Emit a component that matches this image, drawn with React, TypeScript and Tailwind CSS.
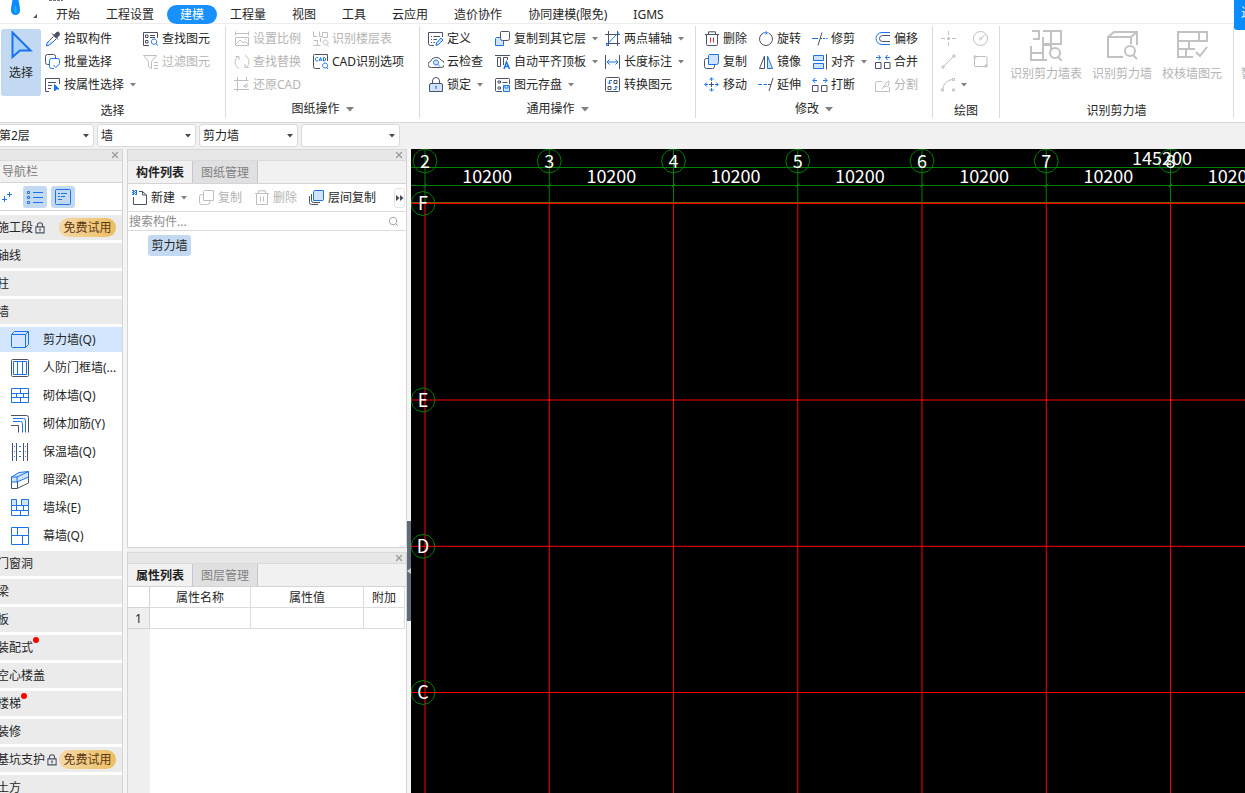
import React from "react";
import { X, Search } from "lucide-react";

/* ───────────────────────────────────────────────
   Icon strokes: d = dark, b = blue, g = disabled
────────────────────────────────────────────────── */
const DARK = "#4b5166";
const BLUE = "#1a73e8";
const GRAY = "#bfbfbf";
const LIGHT = "#d0e3fb";

const d = (path: string, fill = "none") => <path d={path} stroke={DARK} fill={fill} />;
const b = (path: string, fill = "none") => <path d={path} stroke={BLUE} fill={fill} />;
const g = (path: string, fill = "none") => <path d={path} stroke={GRAY} fill={fill} />;

const icons: Record<string, React.ReactNode> = {
    pick: (
        <>
            {d("M8.5 3.5 12.5 7.5M9 4.5 11.5 1.5Q13 .5 14 1.5T14 4.5L11.5 7Z", DARK)}
            {d("M7 2.5 13 8.5M8.5 5.5 4.5 9.5M11 8 8 11")}
            {b("M8 11 4.5 14 1.5 15 2 12 4.5 9.5", LIGHT)}
        </>
    ),
    batch: (
        <>
            {d("M5 10.5H2.5Q.5 10.5.5 8.5V2.5Q.5.5 2.5.5H8.5Q10.5.5 10.5 2.5V4")}
            {b("M9 14.5H6.5Q4.5 14.5 4.5 12.5V6.5Q4.5 4.5 6.5 4.5H12.5Q14.5 4.5 14.5 6.5V9M8.5 11 10.8 13.5 15 9.5")}
        </>
    ),
    byProp: (
        <>
            {d("M4 14.5H.5V1.5H14.5V7M3 5.5H11M3 8.5H7M3 11.5H6")}
            {b("M9.5 7.5 14 12 11.5 12 9.5 14Z", BLUE)}
        </>
    ),
    find: (
        <>
            {d("M6 14.5H.5V1.5H14.5V7M2.5 4H5V6.5H2.5ZM2.5 9.5H5V12H2.5ZM7 4.5H12M7 6.5H12")}
            {b("M11 8A2.7 2.7 0 1 0 11.1 8M13 12.5 15 14.8")}
        </>
    ),
    filter: g("M.5 1.5H13.5L8.5 7.5V14.5L5.5 12.5V7.5ZM11 8.5H15M11 11.5H15M11 14.5H15"),
    scale: g("M1.5.5V4.5M14.5.5V4.5M2 2.5H14M1.5 6.5H14.5V14.5H1.5ZM2 13 6 9 9 12 11 10.5 14 13M11 8.5H12"),
    replace: g("M5 14.5A7 7 0 0 1 4 2.5M1.5 2.5H5V6M11 1.5A7 7 0 0 1 12 13.5M14.5 13.5H11V10"),
    restore: g("M3.5 0V14.5M0 3.5H14.5M12.5 0V3M0 12.5H15M14 6.5 10 9 13 11M9 9H14"),
    floorTable: g("M.5.5V5.5H4M6.5.5V5.5H9.5V1.5H14.5V6.5H9.5M.5 9.5H4.5M.5 14.5H7.5M4.5 9V14M7.5 7V11M12.5 9A2.5 2.5 0 1 0 12.6 9M14 13.5 15.5 15.5"),
    cadOpt: (
        <>
            {d("M7 14.5H2.5Q.5 14.5.5 12.5V1.5Q.5.5 1.5.5H14.5V7")}
            {b("M5 3.5H3.5L2.5 4.5V6L3.5 7H5M6 7 7.5 3.5 9 7M6.5 6H8.5M10.5 3.5V7H11.5L12.5 6V4.5L11.5 3.5Z")}
            {b("M12 9A2.5 2.5 0 1 0 12.1 9M13.5 13 15 15")}
        </>
    ),
    define: (
        <>
            {d("M6 14.5H2.5Q.5 14.5.5 12.5V1.5H14.5V6M3 5.5H4M5.5 5.5H12M3 8.5H4M5.5 8.5H9M3 11.5H4M5.5 11.5H7")}
            {b("M8.5 12 13 7 15 9 10.5 13.5 8 14.5Z", LIGHT)}
        </>
    ),
    cloud: (
        <>
            {d("M4 13.5H3.5A3 3 0 0 1 2.5 7.5A6 6 0 0 1 13.5 6.5A3.5 3.5 0 0 1 12.5 13.5Z")}
            {b("M8 6A2.5 2.5 0 1 0 8.1 6M9.8 10.3 12 12.5", LIGHT)}
        </>
    ),
    lock: (
        <>
            {d("M4.5 6V4A3.5 3.5 0 0 1 11.5 4V6")}
            {d("M3 6.5H13Q14.5 6.5 14.5 8V14.5H1.5V8Q1.5 6.5 3 6.5Z", LIGHT)}
            {b("M8 9V12M7.5 9.5H8.5")}
        </>
    ),
    copyLayer: (
        <>
            {b("M1.5 6.5H8.5V14.5H.5V7.5Z", LIGHT)}
            {d("M6.5.5H13.5Q14.5.5 14.5 1.5V7.5Q14.5 9.5 12.5 9.5H7.5Q5.5 9.5 5.5 7.5V1.5Q5.5.5 6.5.5Z", "#fff")}
        </>
    ),
    alignTop: (
        <>
            {d("M0 1.5H15M2.5 3.5H5.5V12.5H2.5ZM8.5 11V3.5H12.5V6")}
            <path d="M9 15 11.5 8 14.5 15M10 12.5H13.5" stroke={BLUE} strokeWidth="1.5" />
        </>
    ),
    save: (
        <>
            {d("M7 14.5H1.5Q.5 14.5.5 13.5V2.5Q.5 1.5 1.5 1.5H13.5Q14.5 1.5 14.5 2.5V7M3 4H5.5V6H3ZM3 10H5.5V12H3ZM7.5 5.5H12.5")}
            {b("M8.5 8.5H14.5V14.5H8.5ZM10 8.5V11H13V8.5", LIGHT)}
        </>
    ),
    twoPoint: (
        <>
            {d("M3.5 0V15M12.5 0V15M0 3.5H15M1 12.5H15")}
            {b("M2 13.5 12.5 2.5M13 1V3.5M1.5 13V14.5H3")}
        </>
    ),
    length: (
        <>
            {d("M.5 1V15M14.5 1V15")}
            {b("M2 8H13M4.5 5.5 2 8 4.5 10.5M10.5 5.5 13 8 10.5 10.5")}
        </>
    ),
    convert: (
        <>
            {d("M2.5.5H13.5Q14.5.5 14.5 1.5V13.5Q14.5 14.5 13.5 14.5H1.5Q.5 14.5.5 13.5V1.5Q.5.5 2.5.5ZM9 3.5H12V6.5H9ZM3 9.5H6V12.5H3Z")}
            {b("M7 3.5H4.5V7M3 5.5 4.5 7 6 5.5M8.5 12.5H11V9M9.5 10.5 11 9 12.5 10.5")}
        </>
    ),
    trash: (
        <>
            {d("M1 3.5H15M4.5 3V.8H11.5V3M2.5 4V13.5Q2.5 14.5 3.5 14.5H12.5Q13.5 14.5 13.5 13.5V4")}
            <path d="M6.5 6.5V11.5M9.5 6.5V11.5" stroke="#e0313b" />
        </>
    ),
    copy: (
        <>
            {d("M4 4.5H2.5Q.5 4.5.5 6.5V12.5Q.5 14.5 2.5 14.5H8.5Q10.5 14.5 10.5 12.5V11")}
            {b("M5.5.5H14.5V8.5Q14.5 10.5 12.5 10.5H4.5V1.5Z", LIGHT)}
        </>
    ),
    move: (
        <>
            {d("M7.5 5V10M5 7.5H10")}
            {b("M7.5 4V.8M5.5 2.8 7.5.8 9.5 2.8M7.5 11V14.2M5.5 12.2 7.5 14.2 9.5 12.2M4 7.5H.8M2.8 5.5.8 7.5 2.8 9.5M11 7.5H14.2M12.2 5.5 14.2 7.5 12.2 9.5")}
        </>
    ),
    rotate: (
        <>
            {d("M5.5 2A6.5 6.5 0 1 0 10.5 2")}
            {b("M7.5 0 9.5 1.8 7.5 3.6M5.5 1.8H9")}
        </>
    ),
    mirror: (
        <>
            {d("M6.5 2V14.5H1.5Z")}
            {b("M9.5 2V14.5H14.5Z", LIGHT)}
        </>
    ),
    extend: (
        <>
            {b("M0 7.5H4M5.5 7.5H9")}
            {d("M10 7.5H13M11 14 15 1")}
        </>
    ),
    trim: (
        <>
            {b("M0 7.5H6")}
            {d("M6 14.5 10 1.5M8 7.5H10")}
            {b("M11 7.5H13M14 7.5H15.5")}
        </>
    ),
    align: (
        <>
            {b("M1.5 1.5H11.5V6.5H1.5ZM1.5 9.5H11.5V14.5H1.5Z", LIGHT)}
            {d("M14.5 0V15.5")}
        </>
    ),
    breakUp: (
        <>
            {b("M5 3.5H1.2M3.2 1 .8 3.5 3.2 6M11 3.5H14.8M12.8 1 15.2 3.5 12.8 6")}
            {d("M.5 8.5H6V14.5H.5ZM9.5 8.5H15V14.5H9.5Z")}
        </>
    ),
    offset: (
        <>
            {b("M15 1.5H7A6 6 0 0 0 7 13.5H15")}
            {d("M15 4.5H7.5A3 3 0 0 0 7.5 10.5H15")}
        </>
    ),
    merge: (
        <>
            {b("M1 3.5H5.5M3.5 1 5.5 3.5 3.5 6M15 3.5H10.5M12.5 1 10.5 3.5 12.5 6")}
            {d("M.5 8.5H6V14.5H.5ZM9.5 8.5H15V14.5H9.5Z")}
        </>
    ),
    split: g("M7 4.5H2.5Q.5 4.5.5 6.5V14.5H14.5V10M7 12 12 5 14 4 13.5 9 9 10"),
    point: (
        <>
            {g("M7.5 0V4M7.5 11V15M0 7.5H4M11 7.5H15")}
            <circle cx="7.5" cy="7.5" r="1.5" fill={GRAY} />
        </>
    ),
    circle: (
        <>
            <circle cx="7.5" cy="7.5" r="7" stroke={GRAY} fill="none" />
            {g("M8 8 12 3.5M7.5 6.5A1.2 1.2 0 1 0 7.6 6.5")}
        </>
    ),
    line: g("M2.5 12.5 12.5 2.5M1 12H3V14H1ZM12 1H14V3H12Z"),
    rect: g("M2.5 2.5H12.5Q14 2.5 14 4V11Q14 12.5 12.5 12.5H3Q1.5 12.5 1.5 11V4M1 2H3V4H1ZM12 11H14V13H12Z"),
    arc: g("M1.5 12Q3 4 11 2.5M.5 12H2.5V14H.5ZM11.5 1.5H13.5V3.5H11.5ZM11.5 12H13.5V14H11.5Z"),
    newDoc: (
        <>
            {d("M7 1.5H10.5L14.5 5V14.5H1.5V7M10.5 1.5V5H14.5")}
            {b("M0 .5H2M3 .5H5M1 1.5H3M4 1.5H5M0 2.5H2M3 2.5H5M1 3.5H3M4 3.5H5M0 4.5H2M3 4.5H5")}
        </>
    ),
    copyOff: g("M4 4.5H2.5Q.5 4.5.5 6.5V12.5Q.5 14.5 2.5 14.5H8.5Q10.5 14.5 10.5 12.5V11M5.5.5H14.5V10.5H4.5V1.5Z"),
    trashOff: g("M1 3.5H15M4.5 3V.8H11.5V3M2.5 4V14.5H13.5V4M6.5 6.5V11.5M9.5 6.5V11.5"),
    floorCopy: (
        <>
            {d("M.5 6V12.5Q.5 14.5 2.5 14.5H9M2.5 4V10.5Q2.5 12.5 4.5 12.5H11")}
            {b("M5.5.5H14.5V9.5Q14.5 10.5 13.5 10.5H4.5V1.5Z", LIGHT)}
        </>
    ),
    smallLock: d("M4.5 6V4.5A3.5 3.5 0 0 1 11.5 4.5V6M2.5 6.5H13.5V14.5H2.5ZM8 10V12.5M7 9.5H9"),
};

/* 18px icons of the wall tree */
const wallIcons: Record<string, React.ReactNode> = {
    shear: (
        <>
            {b("M.5 3.5 3.5.5H17.5L14.5 3.5Z", LIGHT)}
            {b("M14.5 3.5 17.5.5V13.5L14.5 16.5Z", LIGHT)}
            {b("M1.5 3.5H14.5V16.5H1.5Q.5 16.5.5 15.5V4.5Q.5 3.5 1.5 3.5Z")}
        </>
    ),
    frame: (
        <>
            {d("M1.5.5H16.5Q17.5.5 17.5 1.5V16.5Q17.5 17.5 16.5 17.5H1.5Q.5 17.5.5 16.5V1.5Q.5.5 1.5.5Z")}
            {b("M2.5 2.5H15.5V15.5H2.5ZM6.5 2.5V15.5M11.5 2.5V15.5")}
        </>
    ),
    brick: b("M.5 1.5H17.5V15.5H.5ZM.5 6.5H17.5M.5 10.5H17.5M9.5 1.5V6.5M5.5 6.5V10.5M12.5 6.5V10.5M9.5 10.5V15.5"),
    rebar: (
        <>
            {d("M0 .5H15.5Q17.5.5 17.5 2.5V17.5M0 10.5H7.5V17.5")}
            {b("M2 3.5H12.5Q14.5 3.5 14.5 5.5V17.5M2 6.5H9.5Q11.5 6.5 11.5 8.5V17.5")}
        </>
    ),
    insulate: (
        <>
            {d("M1.5 0V18M5.5 0V18M12.5 0V18M16.5 0V18")}
            {b("M3 3.5H4M8 3.5H10M14 3.5H15M3 8.5H4M8 8.5H10M14 8.5H15M3 13.5H4M8 13.5H10M14 13.5H15")}
        </>
    ),
    beam: (
        <>
            {d("M.5 10V17.5H6L17.5 12V6")}
            {b("M.5 6 8 1.5 17.5.5V6L6 11H.5Z", LIGHT)}
            {b("M.5 6H6L17.5.5M6 6V11")}
            {d("M6.5 11V17")}
        </>
    ),
    pier: (
        <>
            {b("M.5.5H5.5V6.5H.5ZM10.5.5H17.5V6.5H10.5Z", LIGHT)}
            {b("M.5 6.5H17.5V16.5H.5ZM.5 11.5H17.5M9.5 11.5V16.5M5.5 6.5V11.5M12.5 6.5V11.5")}
        </>
    ),
    curtain: b("M.5.5H17.5V17.5H.5ZM.5 8.5H17.5M6.5.5V8.5M11.5 8.5V17.5"),
};

function Icon({ name }: { name: string }) {
    return (
        <svg viewBox="0 0 16 16" className="h-4 w-4 shrink-0" fill="none" aria-hidden="true">
            {icons[name]}
        </svg>
    );
}

function Caret({ dark }: { dark?: boolean }) {
    return (
        <svg viewBox="0 0 6 4" className="h-1 w-1.5 shrink-0" aria-hidden="true">
            <path d="M0 0H6L3 3.5Z" fill={dark ? "#444a55" : "#808080"} />
        </svg>
    );
}

/* ───────────────────────────────────────────────
   Ribbon
────────────────────────────────────────────────── */
type Tool = { icon: string; label: string; off?: boolean; menu?: boolean };

function ToolColumn({ tools, className }: { tools: Tool[]; className?: string }) {
    return (
        <div className={`flex shrink-0 flex-col ${className ?? ""}`}>
            {tools.map((t) => (
                <button
                    key={t.label}
                    type="button"
                    disabled={t.off}
                    className="flex h-[23px] items-center gap-[3px] text-[#262626] disabled:text-[#b4b4b4]"
                >
                    <Icon name={t.icon} />
                    <span>{t.label}</span>
                    {t.menu && (
                        <span className="ml-[3px] flex">
                            <Caret />
                        </span>
                    )}
                </button>
            ))}
        </div>
    );
}

function Group({ title, menu, className, children }: {
    title: string;
    menu?: boolean;
    className?: string;
    children: React.ReactNode;
}) {
    return (
        <section className={`flex shrink-0 ${className ?? ""}`}>
            <div className="flex min-w-0 flex-1 flex-col">
                <div className="flex h-[74px] pt-[3px]">{children}</div>
                <div className={`flex h-6 items-center justify-center gap-1.5 ${menu ? "pb-[2px]" : "pt-[2px]"}`}>
                    <span>{title}</span>
                    {menu && (
                        <svg viewBox="0 0 8 5" className="h-[5px] w-2" aria-hidden="true">
                            <path d="M0 0H8L4 4.5Z" fill="#808080" />
                        </svg>
                    )}
                </div>
            </div>
            <div className="mt-[2px] h-[92px] w-px bg-[#dcdcdc]" />
        </section>
    );
}

function BigTool({ label, children }: { label: string; children: React.ReactNode }) {
    return (
        <button type="button" disabled className="flex shrink-0 flex-col items-center gap-[5px] pt-[2px] text-[#b4b4b4]">
            <svg viewBox="0 0 32 32" className="h-8 w-8" fill="none" stroke="#c2c2c2" strokeWidth="2" aria-hidden="true">
                {children}
            </svg>
            <span>{label}</span>
        </button>
    );
}

const tabs = ["开始", "工程设置", "建模", "工程量", "视图", "工具", "云应用", "造价协作", "协同建模(限免)", "IGMS"];

function Ribbon() {
    return (
        <div className="flex h-[99px] shrink-0 overflow-hidden border-b border-[#d6d6d6] bg-white">
            <Group title="选择" className="w-[226px]">
                <button
                    type="button"
                    className="ml-px mt-[2px] flex h-[67px] w-10 shrink-0 flex-col items-center gap-1.5 rounded-[3px] bg-[#c2d9f1] pt-[2px]"
                >
                    <svg viewBox="0 0 24 28" className="h-7 w-6" fill="#a9d0fa" aria-hidden="true">
                        <path d="M3.5 1.5 21.5 19.5H11L3.5 26Z" stroke={BLUE} strokeWidth="2" />
                    </svg>
                    <span>选择</span>
                </button>
                <ToolColumn
                    className="ml-1 w-[98px]"
                    tools={[
                        { icon: "pick", label: "拾取构件" },
                        { icon: "batch", label: "批量选择" },
                        { icon: "byProp", label: "按属性选择", menu: true },
                    ]}
                />
                <ToolColumn
                    tools={[
                        { icon: "find", label: "查找图元" },
                        { icon: "filter", label: "过滤图元", off: true },
                    ]}
                />
            </Group>
            <Group title="图纸操作" menu className="w-[194px]">
                <ToolColumn
                    className="ml-2 w-[79px]"
                    tools={[
                        { icon: "scale", label: "设置比例", off: true },
                        { icon: "replace", label: "查找替换", off: true },
                        { icon: "restore", label: "还原CAD", off: true },
                    ]}
                />
                <ToolColumn
                    tools={[
                        { icon: "floorTable", label: "识别楼层表", off: true },
                        { icon: "cadOpt", label: "CAD识别选项" },
                    ]}
                />
            </Group>
            <Group title="通用操作" menu className="w-[276px]">
                <ToolColumn
                    className="ml-2 w-[67px]"
                    tools={[
                        { icon: "define", label: "定义" },
                        { icon: "cloud", label: "云检查" },
                        { icon: "lock", label: "锁定", menu: true },
                    ]}
                />
                <ToolColumn
                    className="w-[110px]"
                    tools={[
                        { icon: "copyLayer", label: "复制到其它层", menu: true },
                        { icon: "alignTop", label: "自动平齐顶板", menu: true },
                        { icon: "save", label: "图元存盘", menu: true },
                    ]}
                />
                <ToolColumn
                    tools={[
                        { icon: "twoPoint", label: "两点辅轴", menu: true },
                        { icon: "length", label: "长度标注", menu: true },
                        { icon: "convert", label: "转换图元" },
                    ]}
                />
            </Group>
            <Group title="修改" menu className="w-[237px]">
                <ToolColumn
                    className="ml-2 w-[54px]"
                    tools={[
                        { icon: "trash", label: "删除" },
                        { icon: "copy", label: "复制" },
                        { icon: "move", label: "移动" },
                    ]}
                />
                <ToolColumn
                    className="w-[54px]"
                    tools={[
                        { icon: "rotate", label: "旋转" },
                        { icon: "mirror", label: "镜像" },
                        { icon: "extend", label: "延伸" },
                    ]}
                />
                <ToolColumn
                    className="w-[63px]"
                    tools={[
                        { icon: "trim", label: "修剪" },
                        { icon: "align", label: "对齐", menu: true },
                        { icon: "breakUp", label: "打断" },
                    ]}
                />
                <ToolColumn
                    tools={[
                        { icon: "offset", label: "偏移" },
                        { icon: "merge", label: "合并" },
                        { icon: "split", label: "分割", off: true },
                    ]}
                />
            </Group>
            <Group title="绘图" className="w-[67px]">
                <div className="ml-2 grid h-[69px] grid-cols-[32px_16px] grid-rows-3">
                    {["point", "circle", "line", "rect", "arc"].map((n) => (
                        <button key={n} type="button" disabled aria-label={n} className="flex items-center gap-1">
                            <Icon name={n} />
                            {n === "arc" && <Caret />}
                        </button>
                    ))}
                </div>
            </Group>
            <Group title="识别剪力墙" className="w-[234px]">
                <div className="flex items-start gap-[10px] pl-[10px]">
                    <BigTool label="识别剪力墙表">
                        <path d="M2 2H9V10H3M13 2H31V15H13V8M21 2V22M1 17V31H17M1 24H14M13 17V31M12 16H22" />
                        <circle cx="25" cy="24" r="5" />
                        <path d="M28 28 32 32" />
                    </BigTool>
                    <BigTool label="识别剪力墙">
                        <path d="M17 28H2V8H25V15M2 8 8 3H31L25 8M31 3V16" />
                        <circle cx="24" cy="22" r="5" />
                        <path d="M27 26 31 30" />
                    </BigTool>
                    <BigTool label="校核墙图元">
                        <path d="M17 28H2V3H31V12H2M23 3V12M13 12V20M2 20H19M10 20V28" />
                        <path d="M20 23 24 27 31 18" />
                    </BigTool>
                </div>
            </Group>
            <div className="flex min-w-0 flex-1 justify-start overflow-hidden pl-[7px] pt-[42px] whitespace-nowrap text-[#b4b4b4]">
                智能布置
            </div>
        </div>
    );
}

/* ───────────────────────────────────────────────
   Left navigation
────────────────────────────────────────────────── */
type Row = { label: string; trial?: boolean; dot?: boolean; icon?: string; active?: boolean };

const navRows: Row[] = [
    { label: "施工段", trial: true },
    { label: "轴线" },
    { label: "柱" },
    { label: "墙" },
    { label: "剪力墙(Q)", icon: "shear", active: true },
    { label: "人防门框墙(...", icon: "frame" },
    { label: "砌体墙(Q)", icon: "brick" },
    { label: "砌体加筋(Y)", icon: "rebar" },
    { label: "保温墙(Q)", icon: "insulate" },
    { label: "暗梁(A)", icon: "beam" },
    { label: "墙垛(E)", icon: "pier" },
    { label: "幕墙(Q)", icon: "curtain" },
    { label: "门窗洞" },
    { label: "梁" },
    { label: "板" },
    { label: "装配式", dot: true },
    { label: "空心楼盖" },
    { label: "楼梯", dot: true },
    { label: "装修" },
    { label: "基坑支护", trial: true },
    { label: "土方" },
];

function CloseBar() {
    return (
        <div className="flex h-3 shrink-0 items-center justify-end border-y border-[#dadada] bg-[#e7e7e7] pr-[2px]">
            <button type="button" aria-label="关闭">
                <X size={10} strokeWidth={3} color="#999" />
            </button>
        </div>
    );
}

function NavRow({ row }: { row: Row }) {
    if (row.icon) {
        return (
            <button
                type="button"
                className={`flex h-[25px] shrink-0 items-center gap-[14px] pl-[11px] whitespace-nowrap ${row.active ? "bg-[#d3e6fd]" : ""}`}
            >
                <svg viewBox="0 0 18 18" className="h-[18px] w-[18px] shrink-0" fill="none" aria-hidden="true">
                    {wallIcons[row.icon]}
                </svg>
                <span>{row.label}</span>
            </button>
        );
    }
    return (
        <button type="button" className="flex h-[25px] shrink-0 items-center justify-between bg-[#ebebeb] pr-1.5">
            <span className="relative -ml-[3px] flex items-center gap-px">
                {row.label}
                {row.trial && (
                    <svg viewBox="0 0 16 16" className="h-3 w-3" strokeWidth="1.4" aria-hidden="true">
                        {icons.smallLock}
                    </svg>
                )}
                {row.dot && <i className="absolute -right-1.5 -top-[3px] h-1.5 w-1.5 rounded-full bg-[#ff0000]" />}
            </span>
            {row.trial && (
                <span className="flex h-[19px] w-[57px] items-center justify-center rounded-full bg-gradient-to-r from-[#f5d8a6] to-[#ecbe5f] text-[#5b3712]">
                    免费试用
                </span>
            )}
        </button>
    );
}

function NavPanel() {
    return (
        <nav className="flex w-[123px] shrink-0 flex-col overflow-hidden border-r border-[#d4d4d4] bg-white">
            <CloseBar />
            <div className="flex h-[22px] shrink-0 items-center border-b border-[#d4d4d4] bg-[#f1f1f1] pl-[2px] text-[#7b7b7b]">
                导航栏
            </div>
            <div className="flex h-7 shrink-0 items-center gap-1 border-b border-[#d4d4d4]">
                <button type="button" aria-label="添加" className="flex h-[22px] w-[19px] items-center pl-[2px]">
                    <svg viewBox="0 0 10 10" className="h-[10px] w-[10px]" stroke={BLUE} aria-hidden="true">
                        <path d="M2.5 4V10M0 7.5H5M7.5 0V5M5 2.5H10" />
                    </svg>
                </button>
                <button type="button" aria-label="列表" className="flex h-[22px] w-6 items-center justify-center rounded-[3px] bg-[#c2d9f1]">
                    <svg viewBox="0 0 16 14" className="h-[14px] w-4" stroke={BLUE} fill="none" aria-hidden="true">
                        <path d="M.5 1.5H2.5V3.5H.5ZM.5 6.5H2.5V8.5H.5ZM.5 11.5H2.5V13.5H.5ZM6 2.5H16M6 7.5H16M6 12.5H16" />
                    </svg>
                </button>
                <button type="button" aria-label="详情" className="flex h-[22px] w-6 items-center justify-center rounded-[3px] bg-[#c2d9f1]">
                    <svg viewBox="0 0 16 16" className="h-4 w-4" stroke={BLUE} fill="none" aria-hidden="true">
                        <path d="M1.5.5H14.5Q15.5.5 15.5 1.5V14.5Q15.5 15.5 14.5 15.5H1.5Q.5 15.5.5 14.5V1.5Q.5.5 1.5.5ZM3 4.5H5M6 4.5H12M3 7.5H5M6 7.5H10M3 10.5H7" />
                    </svg>
                </button>
            </div>
            <div className="flex min-h-0 flex-1 flex-col gap-[3px] overflow-hidden pt-1">
                {navRows.map((r) => (
                    <NavRow key={r.label} row={r} />
                ))}
            </div>
        </nav>
    );
}

/* ───────────────────────────────────────────────
   Component + property panels
────────────────────────────────────────────────── */
function PanelTabs({ active, other }: { active: string; other: string }) {
    return (
        <div className="flex h-[23px] shrink-0 border-b border-[#d4d4d4] bg-[#f1f1f1]">
            <button type="button" className="w-16 bg-[#f1f1f1] pt-[2px] font-bold text-[#222]">
                {active}
            </button>
            <button type="button" className="w-[66px] border-x border-[#c4c7ce] bg-[#e0e0e2] pt-[2px] text-[#808080]">
                {other}
            </button>
        </div>
    );
}

function PanelTool({ icon, label, off, menu }: Tool) {
    return (
        <button type="button" disabled={off} className="flex items-center gap-[3px] disabled:text-[#b4b4b4]">
            <Icon name={icon} />
            {label}
            {menu && (
                <span className="ml-[3px] flex">
                    <Caret />
                </span>
            )}
        </button>
    );
}

function MiddlePanels() {
    return (
        <aside className="flex w-[280px] shrink-0 flex-col gap-1">
            <section className="flex h-[399px] shrink-0 flex-col border-x border-b border-[#d4d4d4] bg-white">
                <CloseBar />
                <PanelTabs active="构件列表" other="图纸管理" />
                <div className="flex h-7 shrink-0 items-center justify-between border-b border-[#dcdcdc] pl-1 pr-px whitespace-nowrap">
                    <div className="flex items-center gap-3">
                        <PanelTool icon="newDoc" label="新建" menu />
                        <PanelTool icon="copyOff" label="复制" off />
                        <PanelTool icon="trashOff" label="删除" off />
                        <PanelTool icon="floorCopy" label="层间复制" />
                    </div>
                    <button type="button" aria-label="更多" className="flex h-5 w-[11px] items-center justify-center rounded-[3px] border border-[#e4e4e4]">
                        <svg viewBox="0 0 8 6" className="h-1.5 w-2 shrink-0" fill="#444a55" aria-hidden="true">
                            <path d="M0 0 3.5 3 0 6ZM4 0 7.5 3 4 6Z" />
                        </svg>
                    </button>
                </div>
                <label className="flex h-[19px] shrink-0 items-center border-b border-[#dcdcdc] pl-px pr-[7px]">
                    <input
                        aria-label="搜索构件"
                        placeholder="搜索构件..."
                        className="h-[18px] min-w-0 flex-1 bg-transparent outline-none placeholder:text-[#8c8c8c]"
                    />
                    <Search size={11} strokeWidth={2} color="#9a9a9a" />
                </label>
                <div className="pl-5 pt-1">
                    <button type="button" className="flex h-[21px] w-[43px] items-center justify-center rounded-[3px] bg-[#c2d9f1]">
                        剪力墙
                    </button>
                </div>
            </section>
            <section className="flex min-h-0 flex-1 flex-col border-x border-[#d4d4d4] bg-white">
                <CloseBar />
                <PanelTabs active="属性列表" other="图层管理" />
                <table className="w-[277px] table-fixed border-separate border-spacing-0 text-center">
                    <thead>
                        <tr className="h-[21px]">
                            <th className="w-[22px] border-b border-r border-[#d4d4d4] p-0" />
                            <th className="w-[101px] border-b border-r border-[#dcdcdc] p-0 pt-[2px] font-normal">属性名称</th>
                            <th className="w-[113px] border-b border-r border-[#dcdcdc] p-0 pt-[2px] font-normal">属性值</th>
                            <th className="border-b border-r border-[#dcdcdc] p-0 pt-[2px] font-normal">附加</th>
                        </tr>
                    </thead>
                    <tbody>
                        <tr className="h-[21px]">
                            <td className="border-b border-r border-[#d4d4d4] bg-[#efefef] p-0 pt-[2px]">1</td>
                            <td className="border-b border-r border-[#dcdcdc] p-0" />
                            <td className="border-b border-r border-[#dcdcdc] p-0" />
                            <td className="border-b border-r border-[#dcdcdc] p-0" />
                        </tr>
                    </tbody>
                </table>
                <div className="w-[22px] flex-1 bg-[#efefef]" />
            </section>
        </aside>
    );
}

/* ───────────────────────────────────────────────
   Drawing area with the axis grid
────────────────────────────────────────────────── */
const STEP = 124.25;
const columns = [2, 3, 4, 5, 6, 7, 8].map((n, i) => ({ n, x: 14 + i * STEP }));
const axes = [
    { n: "F", y: 54.5 },
    { n: "E", y: 251 },
    { n: "D", y: 397.3 },
    { n: "C", y: 543.5 },
];

const bubble = (cx: number, cy: number) =>
    Array.from({ length: 12 }, (_, i) => {
        const a = (i * Math.PI) / 6;
        return `${cx + 12 * Math.sin(a)},${cy - 12 * Math.cos(a)}`;
    }).join(" ");

function Canvas() {
    return (
        <main className="min-w-0 flex-1 overflow-hidden bg-black">
            <svg
                className="block h-full w-full font-['Noto_Sans_CJK_SC',sans-serif] text-[18px]"
                fill="none"
                stroke="#008000"
                aria-label="轴网"
            >
                <path d="M0 18.5H4000M0 36.5H4000" />
                {columns.map((c) => (
                    <g key={c.n}>
                        <path d={`M${c.x} 0V54`} />
                        <path d={`M${c.x - 2} 38.5 ${c.x + 2} 34.5`} />
                        <path d={`M${c.x} 54V4000`} stroke="#f00" />
                        <polygon points={bubble(c.x, 12)} />
                    </g>
                ))}
                {axes.map((a) => (
                    <g key={a.n}>
                        <path d={`M0 ${a.y}H4000`} stroke="#f00" />
                        <polygon points={bubble(12, a.y)} />
                    </g>
                ))}
                <path d="M0 53.5H4000" stroke="#6b5a00" />
                <g fill="#fff" stroke="none" textAnchor="middle">
                    {columns.map((c) => (
                        <React.Fragment key={c.n}>
                            <text x={c.x} y="19">{c.n}</text>
                            <text x={c.x + STEP / 2} y="34">10200</text>
                        </React.Fragment>
                    ))}
                    <text x="751" y="16">145200</text>
                    {axes.map((a) => (
                        <text key={a.n} x="12" y={Math.floor(a.y) + 7}>{a.n}</text>
                    ))}
                </g>
            </svg>
        </main>
    );
}

/* ───────────────────────────────────────────────
   App
────────────────────────────────────────────────── */
const filters = ["第2层", "墙", "剪力墙", ""];

export default function App() {
    return (
        <div className="flex h-screen flex-col overflow-hidden bg-[#f1f1f1] font-['Noto_Sans','Noto_Sans_CJK_SC',sans-serif] text-[12px] leading-4 text-[#262626]">
            <header className="relative flex h-6 shrink-0 border-b border-[#ececec] bg-white">
                <div className="flex w-[43px] shrink-0 gap-3 pl-[10px]">
                    <svg viewBox="0 0 11 16" className="h-4 w-[11px]" aria-hidden="true">
                        <path d="M2.5 0H8.5Q10 7 10 10.5A4.5 4.5 0 0 1 1 10.5Q1 7 2.5 0Z" fill="#0a8cff" />
                        <path d="M5.5 5Q7.5 9 6 14 3 11 5.5 5Z" fill="#25b6ff" />
                    </svg>
                    <svg viewBox="0 0 4 4" className="mt-[14px] h-1 w-1" aria-hidden="true">
                        <path d="M4 0V4H0Z" fill="#555" />
                    </svg>
                </div>
                {/* lower edge of the quick access icons */}
                <svg viewBox="0 0 14 1" className="absolute left-[49px] top-0 h-px w-[14px]" aria-hidden="true">
                    <path d="M0 .5H14" stroke="#777" strokeDasharray="3 1" />
                </svg>
                <nav className="flex pt-[5px]">
                    {tabs.map((t) => (
                        <button
                            key={t}
                            type="button"
                            className={`h-[19px] rounded-full px-[13px] whitespace-nowrap ${t === "建模" ? "bg-[#1890ff] text-white" : ""}`}
                        >
                            {t}
                        </button>
                    ))}
                </nav>
                <button
                    type="button"
                    className="absolute right-0 top-0 h-[30px] w-[11px] overflow-hidden rounded-bl-[3px] bg-[#0a8cff] pb-1 pl-[7px] text-left whitespace-nowrap text-white"
                >
                    进入
                </button>
            </header>

            <Ribbon />

            <div className="flex h-[26px] shrink-0 gap-[3px] pt-px">
                {filters.map((f, i) => (
                    <div key={i} className="relative w-[99px] shrink-0 first:-ml-[5px]">
                        <select
                            aria-label={`筛选${i + 1}`}
                            defaultValue={f}
                            className="h-[23px] w-full appearance-none rounded-[3px] border border-[#dadada] bg-white pl-[3px] outline-none"
                        >
                            <option>{f}</option>
                        </select>
                        <span className="pointer-events-none absolute right-[5px] top-[10px] flex">
                            <Caret dark />
                        </span>
                    </div>
                ))}
            </div>

            <div className="flex min-h-0 flex-1">
                <NavPanel />
                <div className="w-1 shrink-0 bg-[#f5f5f5]" />
                <MiddlePanels />
                <div className="flex w-1 shrink-0 flex-col bg-[#f5f5f5]">
                    <button
                        type="button"
                        aria-label="收起"
                        className="mt-[372px] flex h-[100px] w-1 items-center justify-center bg-[#5f6b78]"
                    >
                        <svg viewBox="0 0 4 6" className="h-1.5 w-1" aria-hidden="true">
                            <path d="M4 0V6L0 3Z" fill="#d0d4d8" />
                        </svg>
                    </button>
                </div>
                <Canvas />
            </div>
        </div>
    );
}
